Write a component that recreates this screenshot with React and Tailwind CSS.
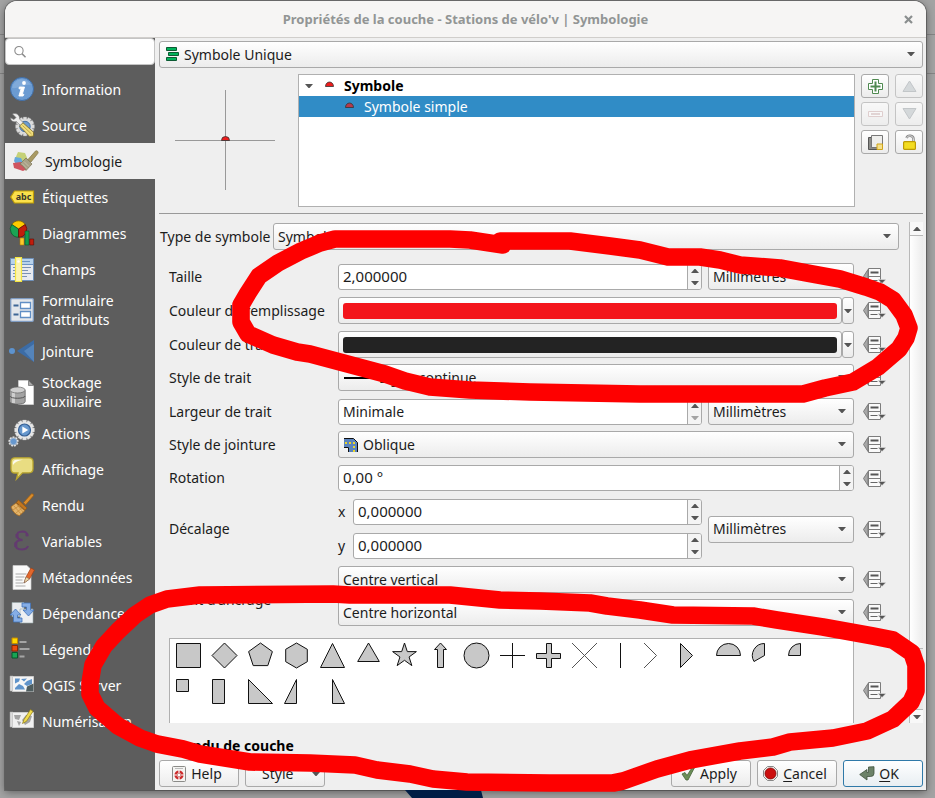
import React from "react";

/* ---------- sidebar icons, all on a 24 x 24 grid ---------- */

const gear = (cx, cy, r, teeth) =>
  Array.from({ length: teeth }, (_, i) => {
    const a = (i * 360) / teeth;
    return (
      <rect
        key={i}
        x={cx - r * 0.2}
        y={cy - r}
        width={r * 0.4}
        height={r * 0.5}
        rx="0.4"
        transform={`rotate(${a} ${cx} ${cy})`}
      />
    );
  });

const icons = {
  info: (
    <>
      <circle cx="12" cy="12" r="11.5" fill="#6b9bd2" stroke="#3f6ea8" />
      <path d="M2 11a10 10 0 0 1 19-3c-7-1-12 4-19 3z" fill="#8db4e0" opacity=".6" />
      <circle cx="14" cy="6" r="1.9" fill="#fff" />
      <path d="M9.3 10h5.2l-2.2 7.3h1.6l-.8 1.7H8.900l2.200-7.200H9z" fill="#fff" stroke="#fff" strokeWidth=".9" />
    </>
  ),
  source: (
    <>
      <g fill="#dcdcdc" stroke="#999" strokeWidth=".4">{gear(15, 13.5, 9.5, 12)}</g>
      <circle cx="15" cy="13.500" r="7.500" fill="#dcdcdc" />
      <circle cx="15" cy="13.500" r="5.200" fill="#6c9bce" stroke="#4672a5" />
      <path d="M2.500 1c3-1.500 7.500.500 7 5l4 4-3 2.600-4-4C3.500 9.500.500 8 .500 4.800l3.500 1.700 2-2z" fill="#eee" stroke="#777" strokeWidth=".6" />
      <path d="M9.500 13l3.500-3.200 10.500 9.400v3.800l-3.800.5z" fill="#f0dd7c" stroke="#7b6a24" strokeWidth=".8" />
      <path d="M12.500 12.500l9 8.500" stroke="#b59f43" strokeWidth=".9" />
    </>
  ),
  symbology: (
    <>
      <path d="M5 3l7 1 3 7-7 3-6-4z" fill="#c5d177" />
      <path d="M2 8l6 1 3 6-8 0-2-3z" fill="#66a9dd" />
      <path d="M0 14l8-1 6 7-4 2-9-3z" fill="#cf5560" />
      <path d="M7 15l6-6 6 6-6 6.500c-1-2.500-3-4.500-6-6.500z" fill="#a8a186" stroke="#807959" strokeWidth=".8" />
      <path d="M9 14.500l5 5M11 12.500l5 5" stroke="#d0cbb4" strokeWidth=".7" />
      <path d="M15 10.500l7.500-8.500c1.500-1 3.500 1 2.300 2.500L18 13z" fill="#a99a63" stroke="#837646" strokeWidth=".7" />
    </>
  ),
  labels: (
    <>
      <path d="M.7 12L4.500 6h19v12h-19z" fill="#fbe14b" stroke="#c19f06" strokeWidth="1.200" />
      <text x="13.500" y="15" textAnchor="middle" fontSize="9" fontWeight="700" fill="#3a3a2c" fontFamily="Noto Sans">abc</text>
    </>
  ),
  diagrams: (
    <>
      <path d="M8.500 8L1.800 3.500A8 8 0 0 1 15.200 3.500z" fill="#fecb00" stroke="#7a5d00" strokeWidth=".7" />
      <path d="M8.500 8v8.200A8 8 0 0 1 1.800 3.500z" fill="#1ba354" stroke="#0a5028" strokeWidth=".7" />
      <path d="M8.500 8v8.200A8 8 0 0 0 15.200 3.500z" fill="#c11c0c" stroke="#570b04" strokeWidth=".7" />
      <path d="M10 17h4v7h-4z" fill="#fcc92c" stroke="#b07b00" strokeWidth=".6" />
      <path d="M15 10h4v14h-4z" fill="#119a4c" stroke="#0a5028" strokeWidth=".6" />
      <path d="M19.700 18h4v6h-4z" fill="#c11c0c" stroke="#570b04" strokeWidth=".6" />
    </>
  ),
  fields: (
    <>
      <path d="M.5 1.500h23v22H.5z" fill="#e7eaf0" stroke="#6e8fb8" />
      <path d="M1 2h22v5H1z" fill="#b7d2ec" />
      <path d="M12 4.500h8M1 7.500h22" stroke="#6b93c4" />
      <path d="M3 10.500h18M3 13.500h15M3 16.500h18M3 19.500h14" stroke="#7a91b4" />
      <path d="M5.500.500h6v24h-6z" fill="#fbf3b0" stroke="#f4e642" strokeWidth="1.200" />
      <circle cx="8.500" cy="4.500" r="1.300" fill="#fff" />
    </>
  ),
  form: (
    <>
      <rect x=".7" y=".7" width="22.600" height="22.600" rx="1" fill="#e4e7eb" stroke="#7f9cc2" strokeWidth="1.300" />
      <path d="M3.500 7.500h5M3.500 16.500h5" stroke="#3f6796" strokeWidth="2" />
      <path d="M10.500 4.500h10v6h-10zM10.500 13.500h10v6h-10z" fill="#fff" stroke="#5f8ec5" strokeWidth="1.300" />
    </>
  ),
  join: (
    <>
      <circle cx="2" cy="12" r="3" fill="#5d93cf" />
      <path d="M7 12L24 1v22z" fill="#3c6ca6" />
      <path d="M14 12L24 5v18z" fill="#6b9ccf" opacity=".5" />
    </>
  ),
  storage: (
    <>
      <path d="M8.500.500h10l5 5v19h-15z" fill="#fff" stroke="#d5d5d5" strokeWidth=".7" />
      <path d="M18.500.500v5h5z" fill="#aaa" stroke="#555" strokeWidth=".6" />
      <path d="M-.3 10.500v11c0 3.700 15.500 3.700 15.500 0v-11z" fill="#a3a3a3" stroke="#555" strokeWidth=".7" />
      <path d="M3.500 12v11" stroke="#cfcfcf" strokeWidth="3" />
      <ellipse cx="7.500" cy="10" rx="7.700" ry="3" fill="#cfcfcf" stroke="#666" strokeWidth=".7" />
      <path d="M-.3 16c1 3 14.500 3 15.500 0" fill="none" stroke="#555" />
    </>
  ),
  actions: (
    <>
      <g fill="#e5e5e5" stroke="#bbb" strokeWidth=".3">{gear(14.5, 9, 10, 12)}{gear(3.5, 20.5, 5, 9)}</g>
      <circle cx="14.500" cy="9" r="8" fill="#e8e8e8" />
      <circle cx="14.500" cy="9" r="6" fill="#6798ce" stroke="#355f94" strokeWidth="1.200" />
      <path d="M12.300 5.500v7l6-3.500z" fill="#fff" />
      <circle cx="3.500" cy="20.500" r="3.300" fill="#6798ce" stroke="#9db4cf" />
    </>
  ),
  display: (
    <>
      <path d="M5 .8h14q4 0 4 4v7q0 4-4 4h-6.500L6.500 22l1.500-6H5q-4 0-4-4v-7q0-4.200 4-4.200z" fill="#e9dd82" stroke="#b9a52c" strokeWidth="1.300" />
      <path d="M3 8q-1-5.300 4-5.300h6q-7 1-10 5.300z" fill="#fff" opacity=".85" />
    </>
  ),
  rendering: (
    <>
      <path d="M13.500 9.500L21.500.800q2.500-.5 2 2l-8 9.200z" fill="#d98c2b" stroke="#9a5a10" strokeWidth=".7" />
      <path d="M8.500 7l8.500 8-2 2.200L6.300 9.500z" fill="#c3761d" stroke="#8d510e" strokeWidth=".6" />
      <path d="M6 10l8.800 7.800-5.500 5q-6-2-8.300-9z" fill="#e2b36a" stroke="#a86a1c" strokeWidth=".8" />
      <path d="M4 13l7 8M7 11.500l6 7.500M3 17l7-5M6 20l6-5" stroke="#c38637" strokeWidth=".7" />
    </>
  ),
  variables: (
    <>
      <path
        d="M17.500 6.500Q17 2.500 12.500 2.500 7 2.700 7 6.500T12.500 11Q5.500 11.200 5.500 15.800t6 4.700Q17 20.500 18 17"
        fill="none"
        stroke="#633a70"
        strokeWidth="2"
      />
      <path d="M7 5v3.500M5.800 13.500v4.500" stroke="#633a70" strokeWidth="3" />
      <circle cx="17" cy="6" r="1.600" fill="#633a70" />
    </>
  ),
  metadata: (
    <>
      <path d="M3 .500h14l4 4v20H3z" fill="#fafafa" stroke="#ccc" strokeWidth=".7" />
      <path d="M5.500 9h11M5.500 12h9M5.500 15h7M5.500 18h8M5.500 21h10" stroke="#aaa" />
      <path d="M14 18l2-6 5-9 3.500 2-5 9z" fill="#e2672c" stroke="#9d3d11" strokeWidth=".7" />
      <path d="M14 18l2-6 3.500 2z" fill="#f0d9a8" stroke="#555" strokeWidth=".4" />
    </>
  ),
  dependencies: (
    <>
      <path d="M2 1.500h12v14H2z" fill="#e9ecef" stroke="#9aa" strokeWidth=".6" />
      <path d="M10 8h13v14H10z" fill="#eef0f2" stroke="#9aa" strokeWidth=".6" />
      <path d="M12 2h8.500v7H24l-5.500 6L13 9h3.500V6H12z" fill="#86aee6" stroke="#4373b9" strokeWidth=".8" />
      <path d="M12 21H3.500v-7H0l5.500-6L11 14H7.500v3H12z" fill="#86aee6" stroke="#4373b9" strokeWidth=".8" />
    </>
  ),
  legend: (
    <>
      <path d="M2 1h5.500v5.500H2z" fill="#ffd800" stroke="#c58a00" />
      <path d="M2 8.500h5.500V14H2z" fill="#e84c10" stroke="#8f2500" />
      <path d="M2 15.500h5.500V21H2z" fill="#18a453" stroke="#07562a" />
      <path d="M9.500 5h7M9.500 12h10M9.500 19.500h5" stroke="#a5a5a5" strokeWidth="1.800" />
    </>
  ),
  server: (
    <>
      <path d="M0 3h3v15H0z" fill="#ddd" stroke="#aaa" strokeWidth=".5" />
      <path d="M2.500 3.500h21v15h-21z" fill="#f4f4f4" stroke="#ccc" />
      <path d="M5 5.500h17v11H5z" fill="#f7f7f7" />
      <path d="M5 5.500h5l-1 3-4 2zM11 6l6-.5-3 3zM5 15l4-4 4 2 2 3.500H5zM14 11l3-3 5-2v5l-5 2z" fill="#5f93ca" />
      <path d="M16 18.500l1-5 6.500-3v8z" fill="#4f5d5f" />
    </>
  ),
  digitizing: (
    <>
      <path d="M0 3h3v15H0z" fill="#ddd" stroke="#aaa" strokeWidth=".5" />
      <path d="M2.500 3.500h21v15h-21z" fill="#f1f1f1" stroke="#ccc" />
      <path d="M4 6h7l-2 5-4-1zM12 11l4-5 6 1-2 6-5 3zM7 12l4 1-2 4z" fill="#a4a4a4" />
      <path d="M12.500 14.500l1.500-4 6.500-10 2.500 1.800-6.500 10z" fill="#f0dc4e" stroke="#8e7a12" strokeWidth=".7" />
    </>
  ),
};

const pages = [
  ["info", "Information"],
  ["source", "Source"],
  ["symbology", "Symbologie"],
  ["labels", "Étiquettes"],
  ["diagrams", "Diagrammes"],
  ["fields", "Champs"],
  ["form", "Formulaire d'attributs"],
  ["join", "Jointure"],
  ["storage", "Stockage auxiliaire"],
  ["actions", "Actions"],
  ["display", "Affichage"],
  ["rendering", "Rendu"],
  ["variables", "Variables"],
  ["metadata", "Métadonnées"],
  ["dependencies", "Dépendances"],
  ["legend", "Légende"],
  ["server", "QGIS Server"],
  ["digitizing", "Numérisation"],
];

function Sidebar() {
  return (
    <nav className="flex w-[150px] shrink-0 flex-col bg-[#5d5d5d]">
      <label className="flex h-[27px] items-center rounded-sm border border-[#c4c4c4] bg-white px-2">
        <svg width="14" height="14" viewBox="0 0 14 14" fill="none" stroke="#8b8b8b" strokeWidth="1.200">
          <circle cx="5.500" cy="5.500" r="4.600" />
          <path d="M8.800 8.800l4 4" strokeWidth="1.600" />
        </svg>
        <input type="search" aria-label="Rechercher" className="w-full min-w-0 bg-transparent pl-1 outline-none" />
      </label>
      <ul className="pt-[6px]">
        {pages.map(([id, name]) => {
          const active = id === "symbology";
          return (
            <li key={id}>
              <button
                type="button"
                className={
                  active
                    ? "flex min-h-9 w-full items-center gap-2 bg-[#efefef] pl-2 text-left leading-[19px] text-[#1c1c1c]"
                    : "flex min-h-9 w-full items-center gap-2 py-1 pl-[5px] text-left leading-[19px] text-white"
                }
              >
                <svg width="24" height="24" viewBox="0 0 24 24" className="shrink-0 overflow-visible">
                  {icons[id]}
                </svg>
                <span className="w-24">{name}</span>
              </button>
            </li>
          );
        })}
      </ul>
    </nav>
  );
}

/* ---------- small shared controls ---------- */

const face = "rounded-[3px] border border-[#a9a9a9] bg-linear-to-b from-white to-[#ececec]";

function Arrow({ up = false, className = "" }) {
  return (
    <svg width="8" height="4" viewBox="0 0 8 4" className={className}>
      <path d={up ? "M0 4h8L4.500 0h-1z" : "M0 0h8L4.500 4h-1z"} fill="#555" />
    </svg>
  );
}

function Combo({ label, id, value, icon, pad = "pl-1", className = "" }) {
  return (
    <div className={`relative h-[27px] ${className}`}>
      <select id={id} aria-label={label} className={`h-full w-full appearance-none outline-none ${pad} pr-6 ${face}`}>
        <option>{value}</option>
      </select>
      {icon && <span className="pointer-events-none absolute inset-y-0 left-[6px] flex items-center">{icon}</span>}
      <Arrow className="pointer-events-none absolute top-[11px] right-[8px]" />
    </div>
  );
}

function Spin({ label, id, value, text = "text-[15px]", downDisabled = false }) {
  return (
    <div className="flex h-[26px] flex-1 overflow-hidden rounded-[3px] border border-[#a9a9a9] bg-white">
      <input
        id={id}
        aria-label={label}
        type="text"
        defaultValue={value}
        className={`w-0 min-w-0 flex-1 pl-1 outline-none ${text}`}
      />
      <div className="flex w-[14px] flex-col border-l border-[#a9a9a9] bg-[#f4f4f4]">
        <button type="button" aria-label="Augmenter" className="flex flex-1 items-center justify-center">
          <Arrow up />
        </button>
        <button
          type="button"
          aria-label="Diminuer"
          disabled={downDisabled}
          className="flex flex-1 items-center justify-center disabled:opacity-50"
        >
          <Arrow />
        </button>
      </div>
    </div>
  );
}

function ColorButton({ label, id, swatch }) {
  return (
    <div className="flex h-[27px] flex-1">
      <button type="button" id={id} aria-label={label} className={`flex-1 px-1 ${face}`}>
        <span className={`block h-4 rounded-[3px] ${swatch}`} />
      </button>
      <button type="button" aria-label="Options de couleur" className={`flex w-3 items-center justify-center ${face}`}>
        <Arrow className="shrink-0" />
      </button>
    </div>
  );
}

function OverrideButton() {
  return (
    <button type="button" aria-label="Valeur définie par des données" className="w-[23px] shrink-0">
      <svg width="23" height="17" viewBox="0 0 23 17">
        <path d="M5 1.500v14L.5 8.500z" fill="#a8a8a8" stroke="#7c7c7c" />
        <path d="M5.500.500h12v16h-12z" fill="#fafafa" stroke="#7c7c7c" />
        <path d="M5.500 8.500h12" stroke="#7c7c7c" />
        <path d="M7.500 4.500h8" stroke="#555" strokeWidth="2" />
        <path d="M7.500 12.500h7" stroke="#666" />
        <path d="M15 11.500h8l-4 4z" fill="#555" stroke="#efefef" strokeWidth=".5" />
      </svg>
    </button>
  );
}

function Row({ label, htmlFor, children }) {
  return (
    <div className="flex items-center pr-[13px] pl-[10px]">
      <label htmlFor={htmlFor} className="w-[169px] shrink-0 whitespace-nowrap">
        {label}
      </label>
      <div className="mr-[9px] flex min-w-0 flex-1 items-center gap-[6px]">{children}</div>
      <OverrideButton />
    </div>
  );
}

/* ---------- marker shapes, centred on the origin ---------- */

const star = Array.from({ length: 10 }, (_, i) => {
  const r = i % 2 ? 4.8 : 12.5;
  const a = (Math.PI * i) / 5;
  return `${(r * Math.sin(a)).toFixed(2)},${(-r * Math.cos(a)).toFixed(2)}`;
}).join("L");

const markers = [
  ["Carré", "M-12-12h24v24h-24z"],
  ["Losange", "M0-12.500L12.500 0 0 12.500-12.500 0z"],
  ["Pentagone", "M0-12.500L11.900-3.900 7.300 10.100H-7.300L-11.900-3.900z"],
  ["Hexagone", "M0-12.500L10.800-6.200V6.200L0 12.500-10.800 6.200V-6.200z"],
  ["Triangle", "M0-12l12 24h-24z"],
  ["Triangle équilatéral", "M0-12.500L10.800 6H-10.800z"],
  ["Étoile", `M${star}z`],
  ["Flèche", "M0-12.500L6-6H3V12H-3V-6H-6z"],
  ["Cercle", "M-12.500 0a12.500 12.500 0 0 1 25 0a12.500 12.500 0 0 1-25 0z"],
  ["Croix", "M0-12.500v25M-12.500 0h25", "line"],
  ["Croix pleine", "M-2-12h5v10h9v5h-9v9h-5v-9h-10v-5h10z"],
  ["Croix diagonale", "M-12.500-12.500l25 25M12.500-12.500l-25 25", "thin"],
  ["Ligne", "M0-12.500v25", "line"],
  ["Chevron", "M-12.500-12.500L0 0-12.500 12.500", "thin"],
  ["Pointe de flèche", "M-12-12L0 0-12 12z"],
  ["Demi-cercle", "M-12 0a12 12 0 0 1 24 0z"],
  ["Tiers de cercle", "M0 0v-12a12 12 0 0 0-10.500 18z"],
  ["Quart de cercle", "M0 0v-12a12 12 0 0 0-12 12z"],
  ["Quart de carré", "M-12-12H0V0h-12z"],
  ["Demi-carré", "M-12-12H0v24h-12z"],
  ["Demi-carré diagonal", "M-12-12l24 24h-24z"],
  ["Demi-triangle droit", "M-12 12H0v-24z"],
  ["Demi-triangle gauche", "M0-12l12 24H0z"],
];

function MarkerList() {
  return (
    <div className="flex items-center pr-[13px] pl-[10px]">
      <div className="mr-[9px] flex h-[85px] min-w-0 flex-1 flex-wrap content-start border-x border-t border-[#b0b0b0] bg-white">
        {markers.map(([name, d, kind]) => (
          <button key={name} type="button" aria-label={name} className="h-9 w-9">
            <svg width="36" height="36" viewBox="-18.500 -16.500 36 36">
              <path d={d} fill={kind ? "none" : "#c8c8c8"} stroke={kind === "thin" ? "#555" : "#111"} />
            </svg>
          </button>
        ))}
      </div>
      <div className="pt-6">
        <OverrideButton />
      </div>
    </div>
  );
}

/* ---------- symbol tree and its tool buttons ---------- */

function RedDot({ dim = false }) {
  return (
    <svg width="9" height="6" viewBox="0 0 9 6">
      <path d="M.5 5.500a4 4.500 0 0 1 8 0z" fill={dim ? "#b63a4c" : "#ee1c1c"} stroke="#333" strokeWidth=".8" />
    </svg>
  );
}

const toolFace = "flex h-6 w-7 items-center justify-center disabled:opacity-60";

function SymbolTree() {
  return (
    <div className="flex h-[133px]">
      <div className="flex w-[139px] shrink-0 justify-center pt-4 pr-[7px]">
        <svg width="100" height="100" viewBox="0 0 100 100">
          <path d="M50.500 0v100M0 50.500h100" stroke="#999" />
          <path d="M46.500 50.500a4 4 0 0 1 8 0z" fill="#ee1c1c" stroke="#333" strokeWidth=".8" />
        </svg>
      </div>
      <ul className="flex-1 border border-[#b0b0b0] bg-white">
        <li className="flex h-[21px] items-center pl-[6px] font-bold text-black">
          <Arrow />
          <span className="mr-[10px] ml-3 flex pb-1">
            <RedDot />
          </span>
          Symbole
        </li>
        <li className="flex h-[21px] items-center bg-[#308cc6] pl-[46px] text-white">
          <span className="mr-[10px] flex pb-1">
            <RedDot dim />
          </span>
          Symbole simple
        </li>
      </ul>
      <div className="ml-[6px] grid grid-cols-2 content-start gap-x-[6px] gap-y-1">
        <button type="button" aria-label="Ajouter une couche de symbole" className={`${toolFace} ${face}`}>
          <svg width="15" height="15" viewBox="0 0 15 15">
            <path d="M4.500.500h6v4h4v6h-4v4h-6v-4h-4v-6h4z" fill="#fff" stroke="#4f8a50" />
            <path d="M7.500 2.500v10M2.500 7.500h10" stroke="#4f8a50" strokeWidth="2" />
          </svg>
        </button>
        <button type="button" disabled aria-label="Monter" className={`${toolFace} ${face}`}>
          <svg width="15" height="12" viewBox="0 0 15 12">
            <path d="M7.500 1l6.500 10.500H1z" fill="#c3c9cd" stroke="#a5abaf" />
          </svg>
        </button>
        <button type="button" disabled aria-label="Supprimer la couche de symbole" className={`${toolFace} ${face}`}>
          <svg width="15" height="6" viewBox="0 0 15 6">
            <path d="M.500.500h14v5H.500z" fill="#fff" stroke="#d5b9b9" />
            <path d="M3 3h9" stroke="#d9c3c3" strokeWidth="2" />
          </svg>
        </button>
        <button type="button" disabled aria-label="Descendre" className={`${toolFace} ${face}`}>
          <svg width="15" height="12" viewBox="0 0 15 12">
            <path d="M7.500 11L14 .500H1z" fill="#c3c9cd" stroke="#a5abaf" />
          </svg>
        </button>
        <button type="button" aria-label="Dupliquer" className={`${toolFace} ${face}`}>
          <svg width="15" height="15" viewBox="0 0 15 15">
            <path d="M.500 2.500h3v10h8v2h-11z" fill="#8c8c88" stroke="#555" />
            <path d="M3.500.500h11v12h-11z" fill="#eeeeec" stroke="#777" />
            <path d="M9 9h5.500v5.500H9z" fill="#f5e08c" stroke="#cfa51b" />
          </svg>
        </button>
        <button type="button" aria-label="Verrouiller la couleur" className={`${toolFace} ${face}`}>
          <svg width="13" height="16" viewBox="0 0 13 16">
            <path d="M3.500 4q1-2.700 4-2.200T10.500 5v3" fill="none" stroke="#8a8a8a" strokeWidth="2.500" />
            <path d="M3.500 4q1-2.700 4-2.200T10.500 5v3" fill="none" stroke="#ddd" strokeWidth=".9" />
            <rect x=".6" y="7.600" width="11.800" height="7.800" rx="1" fill="#f3dc20" stroke="#bd9b05" strokeWidth="1.200" />
          </svg>
        </button>
      </div>
    </div>
  );
}

/* ---------- property form ---------- */

const joinIcon = (
  <svg width="14" height="14" viewBox="0 0 14 14">
    <path d="M0 .500h9.500l4 4V14H5V9.500H0z" fill="#5b84bd" />
    <path d="M0 .500h9.500l4 4V14M0 9.500h4.500V14" fill="none" stroke="#111" />
    <path d="M1 5h9v9" fill="none" stroke="#ead62c" strokeWidth="2" strokeDasharray="2 2" />
  </svg>
);

const rows = "flex flex-col gap-[7px]";

function Form() {
  return (
    <div className="min-w-0 flex-1">
      <div className="mb-[13px] flex items-center pt-px">
        <label htmlFor="type" className="w-[114px] shrink-0 pl-px whitespace-nowrap">
          Type de symbole
        </label>
        <Combo id="type" label="Type de symbole" value="Symbole simple" className="flex-1" />
      </div>
      <div className="flex flex-col gap-[6px]">
        <div className={rows}>
          <Row label="Taille" htmlFor="size">
            <Spin id="size" value="2,000000" />
            <Combo label="Unité de taille" value="Millimètres" className="w-[146px]" />
          </Row>
          <Row label="Couleur de remplissage" htmlFor="fill">
            <ColorButton id="fill" label="Couleur de remplissage" swatch="bg-[#f3151b]" />
          </Row>
          <Row label="Couleur de trait" htmlFor="stroke">
            <ColorButton id="stroke" label="Couleur de trait" swatch="bg-[#232323]" />
          </Row>
        </div>
        <div className={rows}>
          <Row label="Style de trait" htmlFor="dash">
            <Combo
              id="dash"
              value="Ligne continue"
              pad="pl-10"
              icon={<span className="h-[2px] w-7 bg-black" />}
              className="flex-1"
            />
          </Row>
          <Row label="Largeur de trait" htmlFor="width">
            <Spin id="width" value="Minimale" text="text-sm" downDisabled />
            <Combo label="Unité de largeur" value="Millimètres" className="w-[146px]" />
          </Row>
        </div>
        <div className={rows}>
          <Row label="Style de jointure" htmlFor="join">
            <Combo id="join" value="Oblique" pad="pl-6" icon={joinIcon} className="flex-1" />
          </Row>
          <Row label="Rotation" htmlFor="rotation">
            <Spin id="rotation" value="0,00 °" />
          </Row>
          <div className="pt-px">
            <Row label="Décalage" htmlFor="offset-x">
              <div className="flex flex-1 flex-col gap-2">
                <div className="flex items-center">
                  <label htmlFor="offset-x" className="w-[15px]">x</label>
                  <Spin id="offset-x" value="0,000000" />
                </div>
                <div className="flex items-center">
                  <label htmlFor="offset-y" className="w-[15px]">y</label>
                  <Spin id="offset-y" value="0,000000" />
                </div>
              </div>
              <Combo label="Unité de décalage" value="Millimètres" className="w-[146px]" />
            </Row>
          </div>
          <div className="flex items-center pr-[13px] pl-[10px]">
            <label htmlFor="anchor-v" className="w-[169px] shrink-0 pt-2">Point d'ancrage</label>
            <div className="flex flex-1 flex-col gap-[6px]">
              <div className="flex items-center gap-[9px]">
                <Combo id="anchor-v" value="Centre vertical" className="flex-1" />
                <OverrideButton />
              </div>
              <div className="flex items-center gap-[9px]">
                <Combo label="Ancrage horizontal" value="Centre horizontal" className="flex-1" />
                <OverrideButton />
              </div>
            </div>
          </div>
        </div>
      </div>
      <div className="pt-3">
        <MarkerList />
      </div>
    </div>
  );
}

function ScrollBar() {
  return (
    <div className="ml-[10px] flex w-[14px] shrink-0 flex-col border-l border-[#b9b9b9]">
      <button type="button" aria-label="Défiler vers le haut" className="flex h-[14px] items-center justify-center border-b border-[#b9b9b9] bg-[#f8f8f8]">
        <Arrow up />
      </button>
      <div className="flex-1 border-b border-[#b9b9b9] bg-linear-to-r from-white to-[#ececec]" />
      <div className="h-[60px] bg-[#e9e9e9]" />
      <button type="button" aria-label="Défiler vers le bas" className="flex h-[14px] items-center justify-center border-t border-[#b9b9b9] bg-[#f8f8f8]">
        <Arrow />
      </button>
    </div>
  );
}

/* ---------- dialog buttons ---------- */

const dialogButton = "flex h-[27px] w-20 items-center justify-center gap-[5px] pr-1";

function Footer() {
  return (
    <div className="flex gap-[6px]">
      <button type="button" className={`${dialogButton} ${face}`}>
        <svg width="14" height="16" viewBox="0 0 14 16">
          <rect x=".5" y=".5" width="13" height="15" rx="1" fill="#f4f4f2" stroke="#8b8b88" />
          <circle cx="7" cy="9" r="3.400" fill="none" stroke="#cc2a2a" strokeWidth="2.400" />
          <path d="M7 4v10M2 9h10" stroke="#fff" strokeWidth="1.200" />
          <circle cx="7" cy="9" r="1.800" fill="#fff" stroke="#a33" strokeWidth=".6" />
          <path d="M3 2.500h8" stroke="#bbb" />
        </svg>
        Help
      </button>
      <button type="button" className={`flex h-[27px] w-20 items-center justify-between pr-1 pl-4 ${face}`}>
        Style
        <Arrow />
      </button>
      <div className="flex-1" />
      <button type="button" className={`${dialogButton} ${face}`}>
        <svg width="14" height="14" viewBox="0 0 14 14">
          <path d="M1 7l3-1.500 2 3L11 .700 13.300 1 7 13H5z" fill="#6b8f57" stroke="#46623a" strokeWidth=".8" />
        </svg>
        Apply
      </button>
      <button type="button" className={`${dialogButton} ${face}`}>
        <svg width="15" height="15" viewBox="0 0 15 15">
          <path d="M4.500.500h6l4 4v6l-4 4h-6l-4-4v-6z" fill="#f0f0ee" stroke="#888" />
          <circle cx="7.500" cy="7.500" r="5.500" fill="#cc0f0f" stroke="#7e0505" strokeWidth=".8" />
        </svg>
        <span>
          <u className="underline-offset-2">C</u>ancel
        </span>
      </button>
      <button type="button" className="flex h-[27px] w-20 items-center justify-center gap-1 rounded-[3px] border border-[#2f79a8] bg-linear-to-b from-white to-[#e8eef2] pr-2">
        <svg width="16" height="15" viewBox="0 0 16 15">
          <path d="M9.500 1L15 .700v6.800q0 3-3.500 3H8V14L.700 8.500 8 3.500V6.500h1.500z" fill="#6c8268" stroke="#3f503c" strokeWidth=".8" />
        </svg>
        <span>
          <u className="underline-offset-2">O</u>K
        </span>
      </button>
    </div>
  );
}

/* Freehand red loops drawn over the dialog. */
function Annotations() {
  return (
    <svg
      width="935"
      height="798"
      viewBox="0 0 935 798"
      className="pointer-events-none absolute top-0 left-0"
      fill="none"
      stroke="#fe0000"
      strokeWidth="17.600"
      strokeLinejoin="round"
      strokeLinecap="round"
    >
      <path d="M503 245L470 240 450 239H335L320 243 301 251 278 263 259 276 248 293 241 305V322L248 334 273 345 297 352 310 354 340 362 385 374 405 381 430 387 470 390 530 392 640 394H803L825 388 853 382 878 367 899 349 906 338 909 328 904 315 893 300 880 292 866 287 840 279 807 273 780 268 740 265 720 260 700 257H668L640 250 610 246 570 241H500" />
      <path d="M333 594L350 595H450L500 600 540 601 590 603 607 606 640 610 673 615 753 616 777 620 823 627 873 636 893 640 912 653 916 665V691L911 702 893 719 867 731 833 738 790 742 773 747 740 751 690 760 657 769 623 781 613 783H550L467 782 433 779 410 774 377 770 355 765 310 763 250 762 200 754 183 749 157 744 140 738 118 726 97 708 90 694V683L93 665 104 646 118 631 135 615 150 605 167 599 200 595z" />
    </svg>
  );
}

export default function App() {
  return (
    <div className="relative flex min-h-screen flex-col overflow-hidden bg-[#a3a3a3] pt-px pr-[9px] pl-[5px] font-['Noto_Sans','Open_Sans',sans-serif] text-sm text-[#1c1c1c]">
      <div className="absolute inset-x-0 top-[34px] h-10 border-y border-[#858585]" />
      <div className="relative flex flex-1 flex-col rounded-t-xl bg-[#efefef] shadow-[0_2px_8px_#00000070,0_0_0_1px_#777]">
        <header className="flex h-[37px] items-center rounded-t-xl border-b border-[#d0cecb] bg-[#f6f5f4] px-[10px] text-[13px] font-bold text-[#929595]">
          <span className="w-4" />
          <h1 className="flex-1 text-center">Propriétés de la couche - Stations de vélo'v | Symbologie</h1>
          <button type="button" aria-label="Fermer" className="flex w-4 justify-center">
            <svg width="9" height="9" viewBox="0 0 9 9" stroke="#8a8e8e" strokeWidth="2.200">
              <path d="M1 1l7 7M8 1L1 8" />
            </svg>
          </button>
        </header>
        <div className="flex flex-1">
          <Sidebar />
          <main className="flex min-w-0 flex-1 flex-col pt-[3px] pr-[3px] pb-[3px] pl-1">
            <Combo
              label="Type de rendu"
              value="Symbole Unique"
              pad="pl-6"
              icon={
                <svg width="14" height="15" viewBox="0 0 14 15" fill="#00b25a" stroke="#0c5a33">
                  <path d="M1.500.500h10v3h-10zM3.500 5.500h10v3h-10zM1.500 10.500h10v3h-10z" />
                </svg>
              }
              className="mb-[6px]"
            />
            <SymbolTree />
            <hr className="mt-[6px] mb-2 border-[#999]" />
            <div className="flex">
              <Form />
              <ScrollBar />
            </div>
            <div className="flex min-h-9 flex-1 items-center pt-2 pl-4 font-bold text-black">Rendu de couche</div>
            <Footer />
          </main>
        </div>
      </div>
      <div className="relative h-2">
        <svg width="80" height="8" viewBox="0 0 80 8" className="ml-[400px]">
          <path d="M0 0h76l2 8H7z" fill="#001d45" />
        </svg>
      </div>
      <Annotations />
    </div>
  );
}
